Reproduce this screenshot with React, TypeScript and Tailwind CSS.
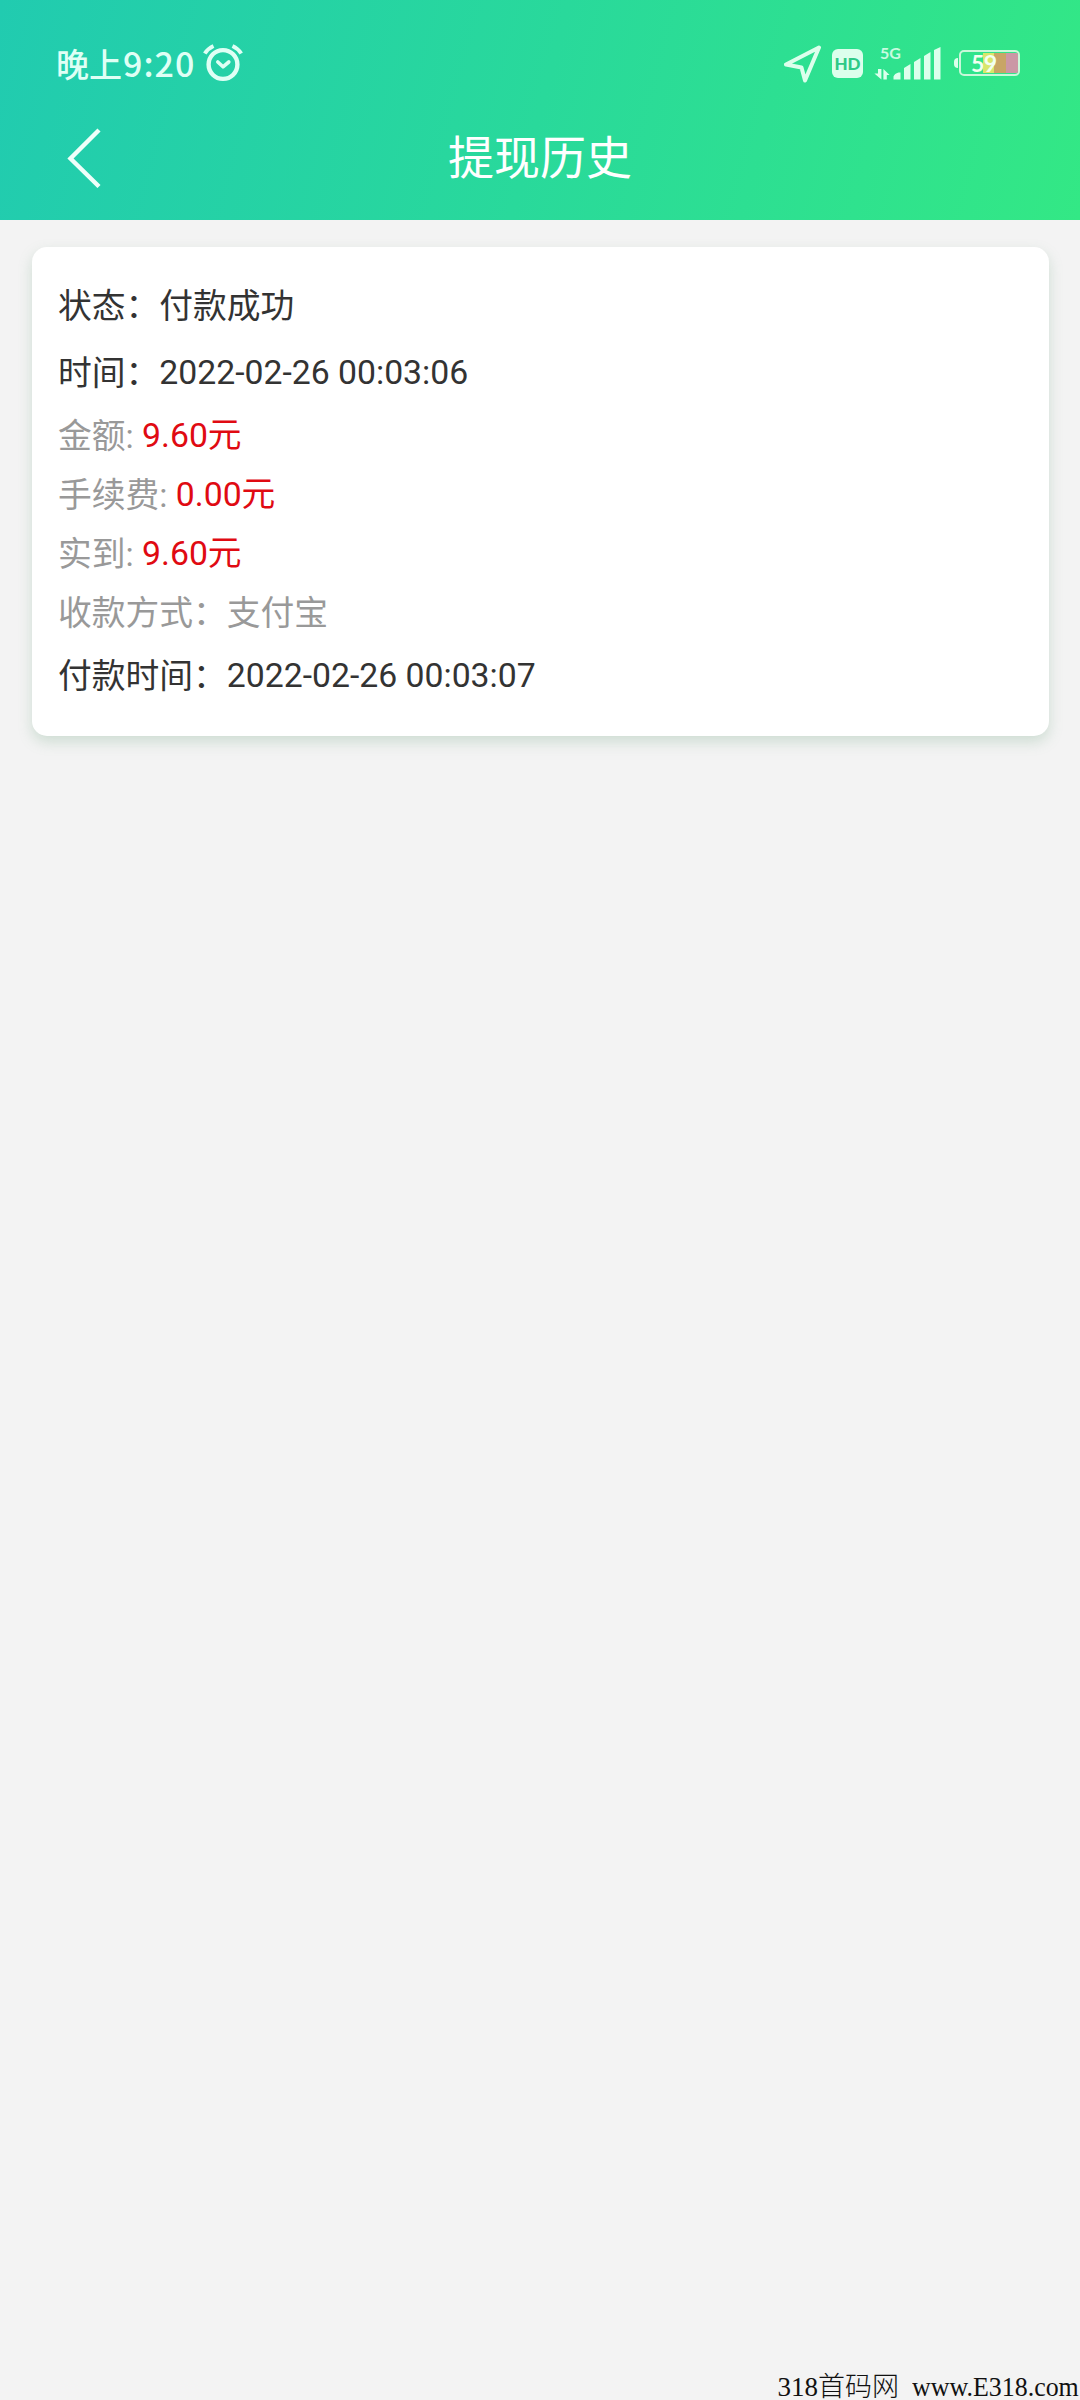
import React from "react";

const sans = "font-['Roboto','Noto_Sans_CJK_SC',sans-serif]";

function AlarmIcon() {
  return (
    <svg width="40" height="38" viewBox="0 0 40 38" fill="none" stroke="#dffff5" strokeLinecap="butt">
      <circle cx="20" cy="20.5" r="14.4" strokeWidth="4.4" />
      <path d="M14.8 18l5.2 4.8 5.8-4.8" strokeWidth="3.6" strokeLinecap="round" strokeLinejoin="round" />
      <path d="M1.8 9.5Q5 4.5 10.5 2M29.5 2Q35 4.5 38.2 9.5" strokeWidth="4" />
    </svg>
  );
}

function LocationIcon() {
  return (
    <svg width="38" height="38" viewBox="0 0 38 38" fill="none" stroke="#dcffec" strokeWidth="4" strokeLinejoin="round">
      <path d="M35 2.5L2 19.5l15.5 3L21 35.5Z" />
    </svg>
  );
}

function SignalIcon() {
  return (
    <div className="flex h-[36px] w-[68px] flex-col">
      <span className="h-[16px] pl-[6px] font-['Lato',sans-serif] text-[16px] leading-[16px] font-bold text-[#c9fbe0]">5G</span>
      <svg className="-mt-[14px]" width="68" height="34" viewBox="0 0 68 34" fill="#dcffec">
        <path d="M4 22h3.400v10.500L0.400 26.500h3.600zM9.400 32.500V22l6.200 6h-2.800v4.500z" />
        <path d="M19.500 32.500v-3q1-3 5-4h2v7zM30 21l6.500-4v15.500h-6.500zM40 15l6.500-4v21.500h-6.500zM50 9l6.500-4v27.500h-6.500zM60 3l6.500-3v32.500h-6.500z" />
      </svg>
    </div>
  );
}

function Battery() {
  return (
    <div className="flex items-center">
      <div className="h-[10px] w-[4px] rounded-l-full bg-[#dcffec]" />
      <div className="relative ml-[1px] flex h-[26px] w-[61px] overflow-hidden rounded-[5px] border-2 border-[#c9f8d9]">
        <div className="my-px ml-[22px] w-[11px] bg-[#d9e66b]" />
        <div className="my-px w-[12px] bg-[#c8a566]" />
        <div className="my-px flex-1 bg-[#cb97a5]" />
        <span className="absolute top-0 left-[10px] font-['Lato',sans-serif] text-[23px] leading-[22px] font-bold tracking-[-0.5px] text-[#f2fff0]">59</span>
      </div>
    </div>
  );
}

type RowProps = { label: string; value: string; tone: "dark" | "amount" | "muted"; height: string };

function Row({ label, value, tone, height }: RowProps) {
  return (
    <div className={`flex items-center whitespace-pre ${height} ${tone === "dark" ? "text-[#333333]" : "text-[#999999]"}`}>
      <span className="pt-[2px]">{label}</span>
      <span className={tone === "amount" ? "text-[#e00a12]" : ""}>{value}</span>
    </div>
  );
}

export default function App() {
  return (
    <div className={`flex h-[2400px] w-[1080px] flex-col overflow-hidden bg-[#f3f3f3] ${sans}`} lang="zh-CN">
      <header className="flex h-[220px] flex-col bg-[linear-gradient(105deg,#21cbb0_0%,#29d99b_50%,#33e885_100%)] text-white">
        <div className="flex h-[94px] items-end justify-between pr-[60px] pl-[56px]">
          <div className="flex h-[62px] items-center">
            <span className="flex items-center font-['Noto_Sans_CJK_SC',sans-serif] text-[33px] leading-[40px] font-medium text-[#dffff5]">
              <span>晚上</span>
              <span className="ml-px text-[34px] tracking-[1px]">9:20</span>
            </span>
            <span className="ml-[8px]"><AlarmIcon /></span>
          </div>
          <div className="flex h-[62px] items-center">
            <div className="mt-[2px]"><LocationIcon /></div>
            <div className="ml-[10px] flex h-[29px] w-[31px] items-center justify-center rounded-[6px] bg-[#dcffec] font-['Lato',sans-serif] text-[17px] leading-none font-black text-[#2fc987]">HD</div>
            <div className="ml-[11px]"><SignalIcon /></div>
            <div className="ml-[12px]"><Battery /></div>
          </div>
        </div>
        <div className="grid h-[126px] grid-cols-3 items-start">
          <svg className="mt-[34px] ml-[67px]" width="34" height="60" viewBox="0 0 34 60" fill="none" stroke="#effffa" strokeWidth="4.4">
            <path d="M32 2L3.500 30.500 32 58.500" />
          </svg>
          <h1 className="mt-[32px] text-center text-[46px] leading-[64px] font-normal">提现历史</h1>
        </div>
      </header>
      <main className="flex-1 pt-[27px] pr-[31px] pl-[32px]">
        <section className="h-[489px] rounded-[15px] bg-white px-[26px] pt-[25px] text-[33.75px] leading-[48px] shadow-[0_6px_14px_rgba(110,165,130,0.28)]">
          <Row label="状态：付款成功" value="" tone="dark" height="h-[67px]" />
          <Row label="时间：" value="2022-02-26 00:03:06" tone="dark" height="h-[67px]" />
          <Row label="金额: " value="9.60元" tone="amount" height="h-[59px]" />
          <Row label="手续费: " value="0.00元" tone="amount" height="h-[59px]" />
          <Row label="实到: " value="9.60元" tone="amount" height="h-[59px]" />
          <Row label="收款方式：支付宝" value="" tone="muted" height="h-[59px]" />
          <Row label="付款时间：" value="2022-02-26 00:03:07" tone="dark" height="h-[67px]" />
        </section>
      </main>
      <footer className="flex h-[26px] items-center justify-end font-['Liberation_Serif','Noto_Sans_CJK_SC',serif] text-[27px] leading-[26px] text-[#111111]">
        <span className="font-light">318首码网</span>
        <span className="ml-[13px] w-[168px] origin-left scale-x-[0.96] whitespace-nowrap">www.E318.com</span>
      </footer>
    </div>
  );
}
